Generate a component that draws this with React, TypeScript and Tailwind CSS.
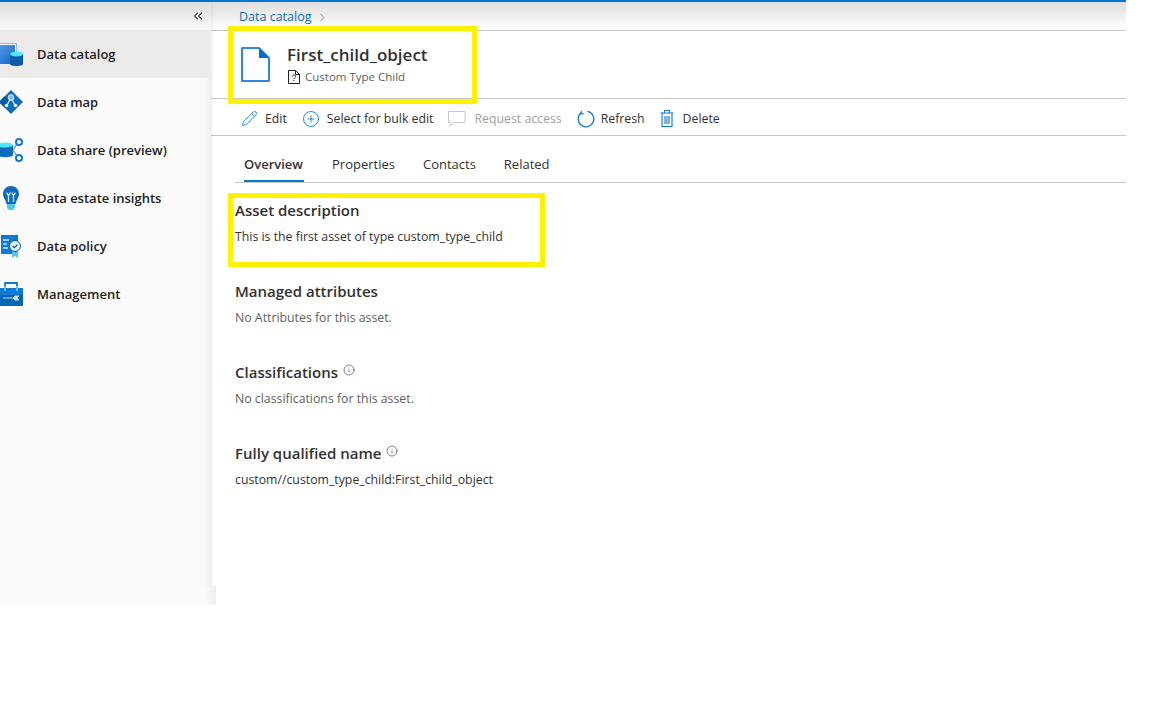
import { ChevronRight, ChevronsLeft, Info, Pencil, CirclePlus } from 'lucide-react'
import type { ReactNode } from 'react'

// nav icons are 28px squares pushed 5px off the left edge, so viewBox x matches page x
function CatalogIcon() {
  return (
    <svg width="28" height="28" viewBox="-5 0 28 28" className="-ml-[5px]">
      <defs>
        <linearGradient id="cat" x1="0" y1="0" x2="1" y2="1">
          <stop offset="0" stopColor="#5ea0ef" />
          <stop offset="1" stopColor="#0f63c4" />
        </linearGradient>
      </defs>
      <rect x="-5" y="3.500" width="21.500" height="20" fill="#fff" stroke="#83b9f9" />
      <rect x="-5" y="5" width="20" height="19" fill="url(#cat)" />
      <path d="M10 14v10c0 1.200 3 2 6.500 2s6.500-.8 6.500-2V14z" fill="#0a5ca8" />
      <ellipse cx="16.500" cy="14" rx="6.500" ry="2.400" fill="#50e6ff" />
    </svg>
  )
}

function MapIcon() {
  return (
    <svg width="28" height="28" viewBox="-5 0 28 28" className="-ml-[5px]">
      <path d="M11 2l12 12-12 12L-1 14z" fill="#0f6cbd" />
      <path d="M-1 14l6-6 6 6-6 6z" fill="#005ba1" />
      <path d="M7 17l4-7 4 7" fill="none" stroke="#cfe6fb" strokeWidth="1.500" />
      <circle cx="11" cy="9.500" r="2.800" fill="#83b9f9" stroke="#e5f1fd" />
      <circle cx="6.500" cy="17.500" r="1.800" fill="#e5f1fd" />
      <circle cx="15.500" cy="17.500" r="1.800" fill="#e5f1fd" />
    </svg>
  )
}

function ShareIcon() {
  return (
    <svg width="28" height="28" viewBox="-5 0 28 28" className="-ml-[5px]">
      <path d="M13 14l4-6M13 14l4 6" stroke="#a3a3a3" strokeWidth="1.500" />
      <path d="M-3 9v10c0 1.300 3 2.200 8 2.200s8-.9 8-2.200V9z" fill="#0f6cbd" />
      <ellipse cx="5" cy="9" rx="8" ry="2.400" fill="#50e6ff" />
      <circle cx="19" cy="6" r="3" fill="#fff" stroke="#0f78d4" strokeWidth="2" />
      <circle cx="19" cy="22" r="3" fill="#fff" stroke="#0f78d4" strokeWidth="2" />
    </svg>
  )
}

function InsightsIcon() {
  return (
    <svg width="28" height="28" viewBox="-5 0 28 28" className="-ml-[5px]">
      <path d="M11 2C6.500 2 3 5.500 3 10c0 3.500 2.500 5.500 3.500 10h9c1-4.500 3.500-6.500 3.500-10 0-4.500-3.500-8-8-8z" fill="#0f6cbd" />
      <path d="M7 20h8v4l-2 2H9l-2-2z" fill="#50c8f0" />
      <path d="M8.500 18v-7M13.500 18v-7M7 8.500c0 3 3 3 3 0M12 8.500c0 3 3 3 3 0" fill="none" stroke="#cfe6fb" strokeWidth="1.300" />
    </svg>
  )
}

function PolicyIcon() {
  return (
    <svg width="28" height="28" viewBox="-5 0 28 28" className="-ml-[5px]">
      <rect x="1" y="3" width="17" height="19" fill="#0f78d4" />
      <path d="M3 8h6M3 12h4M3 16h5" stroke="#cfe6fb" strokeWidth="1.500" />
      <path d="M12 18v8l3-2 3 2v-8z" fill="#50c8f0" />
      <circle cx="15" cy="14" r="5.500" fill="#e5f1fd" stroke="#005ba1" />
      <path d="M12.700 14l1.700 1.700 3-3" fill="none" stroke="#005ba1" strokeWidth="1.300" />
    </svg>
  )
}

function ToolboxIcon() {
  return (
    <svg width="28" height="28" viewBox="-5 0 28 28" className="-ml-[5px]">
      <path d="M5 9V3h12v6" fill="none" stroke="#0f78d4" strokeWidth="1.800" />
      <rect x="-1" y="8" width="24" height="7" fill="#0f78d4" />
      <rect x="-1" y="15" width="24" height="11" fill="#0067b8" />
      <rect x="4" y="6" width="2" height="5" fill="#50c8f0" />
      <rect x="16" y="6" width="2" height="5" fill="#50c8f0" />
      <path d="M3 18h10l2-2h4l-2 2 2 2h-4l-2-2" fill="#d8d8d8" stroke="#d8d8d8" />
    </svg>
  )
}

function RefreshGlyph() {
  return (
    <svg width="18" height="18" viewBox="0 0 18 18" fill="none" stroke="#0f78d4" strokeWidth="1.300">
      <path d="M10.500 1.300A7.800 7.800 0 1 1 4.500 2.600" />
      <path d="M4.300 0.800v3h3" strokeWidth="1.100" />
    </svg>
  )
}

function TrashGlyph() {
  return (
    <svg width="14" height="17" viewBox="0 0 14 17" fill="none" stroke="#0f78d4" strokeWidth="1.100">
      <path d="M0.500 3h13M2 3v13.500h10V3M4.500 3V0.500h5V3M5 6v8M7 6v8M9 6v8" />
    </svg>
  )
}

function CommentGlyph() {
  return (
    <svg width="18" height="16" viewBox="0 0 18 16" fill="none" stroke="#c8c6c4" strokeWidth="1">
      <path d="M0.500 0.500h16.500v11H5.500l-3.500 3.500v-3.500H0.500z" />
    </svg>
  )
}

function TypeGlyph() {
  return (
    <svg width="12" height="14" viewBox="0 0 12 14" fill="none" stroke="#201f1e" strokeWidth="1">
      <path d="M0.500 0.500h7l4 4v9h-11zM7.500 0.500v4h4" />
      <path d="M4.500 6.500c0-2 3-2 3 0 0 1.200-1.500 1.200-1.500 2.500M6 10v1.200" />
    </svg>
  )
}

function NavItem({ icon, label, active = false }: { icon: ReactNode; label: string; active?: boolean }) {
  return (
    <div className={`flex h-12 items-center ${active ? 'mr-[2px] bg-[#edebe9]' : ''}`}>
      <span className="flex w-[37px] shrink-0 items-center overflow-hidden">{icon}</span>
      <span className="pt-[1px] text-[13px] font-semibold whitespace-nowrap text-[#201f1e]">{label}</span>
    </div>
  )
}

function ToolButton({ icon, label, disabled = false, slot = 'w-6' }: { icon: ReactNode; label: string; disabled?: boolean; slot?: string }) {
  return (
    <div className="flex items-center">
      <span className={`flex shrink-0 items-center ${slot}`}>{icon}</span>
      <span className={`pt-[2px] text-[12.300px] whitespace-nowrap ${disabled ? 'text-[#a19f9d]' : 'text-[#323130]'}`}>{label}</span>
    </div>
  )
}

function Section({ title, info = false, className = '', children }: { title: string; info?: boolean; className?: string; children: ReactNode }) {
  return (
    <section className={className}>
      <h3 className="flex h-5 items-center text-[15px] font-semibold text-[#323130]">
        {title}
        {info && <Info size={12} strokeWidth={1.200} className="mb-1 ml-[5px] text-[#323130]" />}
      </h3>
      <div className="mt-[9px] text-[12.300px] leading-4">{children}</div>
    </section>
  )
}

export default function App() {
  return (
    <div
      className="relative h-[720px] w-[1152px] overflow-hidden bg-white"
      style={{ fontFamily: '"Open Sans", "Noto Sans", sans-serif' }}
    >
      <div className="w-[1126px]">
        <div className="h-[2px] bg-[#0078d4]" />
        <div className="flex h-[603px]">
          {/* Left nav */}
          <aside className="relative z-10 flex w-[211px] shrink-0 flex-col">
            <div className="h-[584px] bg-[#fafafa] shadow-[inset_-8px_0_6px_-6px_rgba(0,0,0,0.08),1px_0_4px_rgba(0,0,0,0.08)]">
              <div className="flex h-7 items-center justify-end bg-gradient-to-b from-[#dedede] to-[#fafafa] pr-[6px]">
                <ChevronsLeft size={14} strokeWidth={1.800} className="text-[#201f1e]" />
              </div>
              <NavItem active icon={<CatalogIcon />} label="Data catalog" />
              <NavItem icon={<MapIcon />} label="Data map" />
              <NavItem icon={<ShareIcon />} label="Data share (preview)" />
              <NavItem icon={<InsightsIcon />} label="Data estate insights" />
              <NavItem icon={<PolicyIcon />} label="Data policy" />
              <NavItem icon={<ToolboxIcon />} label="Management" />
            </div>
            <div className="h-[19px] w-[216px] bg-gradient-to-r from-[#fafafa] from-[95%] to-[#eeeeee]" />
          </aside>

          {/* Main column */}
          <main className="min-w-0 flex-1">
            <div className="flex h-[29px] items-center border-b border-[#c8c6c4] bg-gradient-to-b from-[#dedede] to-white pt-[2px] pl-7 text-[12.500px] text-[#0f6cbd]">
              Data catalog
              <ChevronRight size={13} strokeWidth={1.200} className="ml-[5px] text-[#605e5c]" />
            </div>

            <div className="flex h-[68px] items-center border-b border-[#c8c6c4] pl-[30px]">
              <svg width="29" height="35" viewBox="0 0 29 35" className="shrink-0">
                <path d="M1 1h17l10 10v23H1z" fill="#fff" stroke="#2b88e8" strokeWidth="2" strokeLinejoin="round" />
                <path d="M18 1v10h10z" fill="#0f6cbd" />
              </svg>
              <div className="ml-[17px]">
                <div className="-mt-[2px] text-[17px] leading-6 font-semibold text-[#323130]">First_child_object</div>
                <div className="mt-[2px] flex items-center gap-[5px] pl-[1px] text-[11.500px] leading-4 text-[#605e5c]">
                  <TypeGlyph />
                  Custom Type Child
                </div>
              </div>
            </div>

            <div className="flex h-[37px] items-center gap-[15px] border-b border-[#c8c6c4] pt-[3px] pl-[30px]">
              <ToolButton icon={<Pencil size={17} strokeWidth={1.200} className="text-[#0f78d4]" />} label="Edit" />
              <ToolButton slot="w-[25px]" icon={<CirclePlus size={18} strokeWidth={1.200} className="text-[#0f78d4]" />} label="Select for bulk edit" />
              <ToolButton disabled slot="w-[26px]" icon={<CommentGlyph />} label="Request access" />
              <ToolButton icon={<RefreshGlyph />} label="Refresh" />
              <ToolButton slot="w-[23px]" icon={<TrashGlyph />} label="Delete" />
            </div>

            <div className="ml-6 flex h-[47px] items-center gap-7 border-b border-[#c8c6c4] pt-[11px] text-[13px] text-[#323130]">
              <div className="relative ml-[9px] flex h-full w-[60px] items-center font-semibold">
                Overview
                <span className="absolute right-0 bottom-0 left-0 h-[2px] bg-[#0078d4]" />
              </div>
              <span>Properties</span>
              <span>Contacts</span>
              <span>Related</span>
            </div>

            <div className="pt-[17px] pl-6">
              <Section title="Asset description" className="text-[#323130]">
                This is the first asset of type custom_type_child
              </Section>
              <Section title="Managed attributes" className="mt-9 text-[#605e5c]">
                No Attributes for this asset.
              </Section>
              <Section title="Classifications" info className="mt-9 text-[#605e5c]">
                No classifications for this asset.
              </Section>
              <Section title="Fully qualified name" info className="mt-9 text-[#323130]">
                custom//custom_type_child:First_child_object
              </Section>
            </div>
          </main>
        </div>
      </div>

      {/* Yellow annotation boxes */}
      <div className="absolute top-[26px] left-[228px] h-[78px] w-[249px] border-[5px] border-[#fff200]" />
      <div className="absolute top-[193px] left-[228px] h-[74px] w-[317px] border-[5px] border-[#fff200]" />
    </div>
  )
}
